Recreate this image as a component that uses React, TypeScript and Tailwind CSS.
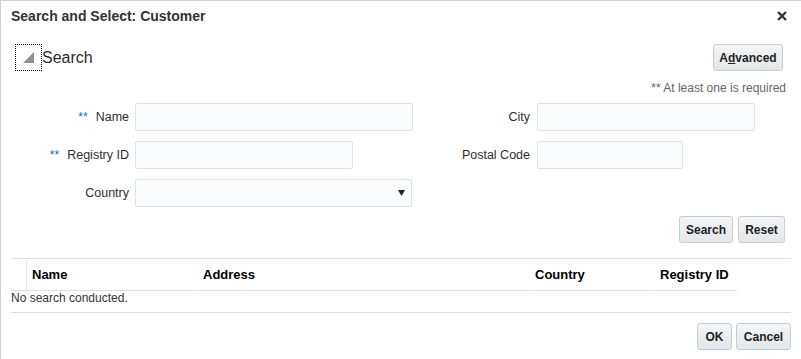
import React from "react";

const font = { fontFamily: '"Liberation Sans", Arial, sans-serif' };

function Btn({ w, children }: { w: string; children: React.ReactNode }) {
  return (
    <button
      className={`${w} h-[27px] flex items-center justify-center rounded-[3px] border border-[#c4ced7] bg-gradient-to-b from-[#f3f5f7] to-[#e3e7ea] text-[12px] font-bold text-[#1f1f1f]`}
    >
      {children}
    </button>
  );
}

function Label({ req, children }: { req?: boolean; children: React.ReactNode }) {
  return (
    <div className="flex items-center justify-end text-[12.5px] text-[#2f2f2f]">
      {req && <span className="mr-[8px] text-[12px] text-[#0a6fc2]">**</span>}
      <span>{children}</span>
    </div>
  );
}

function Input({ w, select }: { w: string; select?: boolean }) {
  return (
    <div
      className={`${w} h-[28px] rounded-[2px] border border-[#dde3e9] bg-[#fbfcfd] flex items-center justify-end pr-[6px]`}
    >
      {select && (
        <svg width="7" height="6" viewBox="0 0 7 6">
          <polygon points="0,0 7,0 3.5,6" fill="#222" />
        </svg>
      )}
    </div>
  );
}

export default function App() {
  return (
    <div
      style={font}
      className="w-[801px] h-[359px] overflow-hidden bg-white border-l border-t border-[#c7d1da] pl-[10px] pr-[10px] flex flex-col"
    >
      {/* title */}
      <div className="h-[30px] flex items-center justify-between">
        <div className="text-[14px] font-bold text-[#333]">Search and Select: Customer</div>
        <svg width="10" height="10" viewBox="0 0 10 10" className="mr-[4px]">
          <path d="M1 1 L9 9 M9 1 L1 9" stroke="#333" strokeWidth="2.4" />
        </svg>
      </div>

      {/* search header */}
      <div className="mt-[13px] h-[27px] flex items-center justify-between">
        <div className="flex items-center ml-[4px]">
          <div className="w-[27px] h-[27px] border border-dotted border-black flex items-center justify-center">
            <svg width="11" height="11" viewBox="0 0 11 11">
              <polygon points="11,0 11,11 0,11" fill="#8c8f93" />
            </svg>
          </div>
          <span className="text-[16px] text-[#2b2b2b] leading-none">Search</span>
        </div>
        <div className="mr-[8px]">
          <Btn w="w-[70px]">
            <span>
              A<span className="underline">d</span>vanced
            </span>
          </Btn>
        </div>
      </div>

      {/* note */}
      <div className="mt-[10px] h-[15px] leading-[15px] text-[12px] text-[#666] text-right mr-[5px]">
        ** At least one is required
      </div>

      {/* form */}
      <div className="mt-[7px] grid grid-cols-[124px_278px_124px_218px] grid-rows-[28px_28px_28px] gap-y-[10px]">
        <div className="pr-[6px] flex justify-end">
          <Label req>Name</Label>
        </div>
        <Input w="w-[278px]" />
        <div className="pr-[7px] flex justify-end">
          <Label>City</Label>
        </div>
        <Input w="w-[218px]" />

        <div className="pr-[6px] flex justify-end">
          <Label req>Registry ID</Label>
        </div>
        <Input w="w-[218px]" />
        <div className="pr-[7px] flex justify-end">
          <Label>Postal Code</Label>
        </div>
        <Input w="w-[146px]" />

        <div className="pr-[6px] flex justify-end">
          <Label>Country</Label>
        </div>
        <Input w="w-[277px]" select />
        <div />
        <div />
      </div>

      {/* search buttons */}
      <div className="mt-[9px] flex justify-end gap-[5px] mr-[6px]">
        <Btn w="w-[54px]">Search</Btn>
        <Btn w="w-[47px]">Reset</Btn>
      </div>

      {/* table */}
      <div className="mt-[15px] border-t border-[#d8dfe6]">
        <div className="flex h-[32px] text-[13px] font-bold text-black">
          <div className="w-[16px] border-b border-[#d8dfe6] flex">
            <div className="ml-[15px] mt-[1px] h-[30px] border-l border-[#e3e8ec]" />
          </div>
          <div className="w-[170px] border-b border-[#d8dfe6] flex items-center pl-[5px]">Name</div>
          <div className="ml-px w-[331px] border-b border-[#d8dfe6] flex items-center pl-[5px]">Address</div>
          <div className="ml-px w-[124px] border-b border-[#d8dfe6] flex items-center pl-[5px]">Country</div>
          <div className="ml-px w-[82px] border-b border-[#d8dfe6] flex items-center pl-[5px]">Registry ID</div>
        </div>
        <div className="h-[22px] border-b border-[#d8dfe6] text-[12px] text-[#333] leading-[14px]">
          No search conducted.
        </div>
      </div>

      {/* footer */}
      <div className="mt-[10px] flex justify-end gap-[4px]">
        <Btn w="w-[35px]">OK</Btn>
        <Btn w="w-[55px]">Cancel</Btn>
      </div>
    </div>
  );
}
